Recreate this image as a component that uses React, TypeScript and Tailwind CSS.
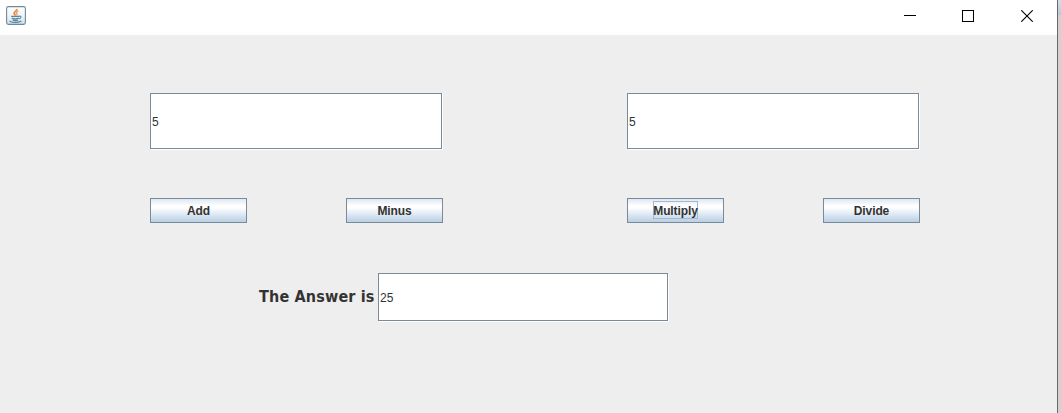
import { useState } from "react";

function JavaIcon() {
  return (
    <svg width="20" height="19" viewBox="0 0 20 19" fill="none">
      <defs>
        <linearGradient id="tile" x1="0" y1="0" x2="0" y2="1">
          <stop offset="0" stopColor="#ffffff" />
          <stop offset="0.5" stopColor="#f2f4f6" />
          <stop offset="1" stopColor="#d3dde5" />
        </linearGradient>
      </defs>
      <rect x="0.6" y="0.6" width="18.8" height="17.8" rx="1.8" fill="url(#tile)" stroke="#6b8aa1" strokeWidth="1.1" />
      <path d="M10.800 2.800c.8 2-3.200 3-2.700 4.800.2.700 1.100 1.200 1.500 1.800" stroke="#ec8a3c" strokeWidth="1.800" />
      <path d="M12.400 5.200c-2 .8-2.500 1.700-1.500 2.600.4.500 0 1-.5 1.500" stroke="#f0a05c" strokeWidth="1.300" />
      <path d="M5.200 10.300h7.900M5.800 12.200c2 .7 5 .7 7 0M6.500 14c1.700.6 4.100.6 5.700 0" stroke="#5684a5" strokeWidth="1.300" />
      <path d="M13 10.300c2.500-.7 2.900 1.500 0 2.500M3.500 15.200c3.600 1.500 9 1.200 12-.3" stroke="#5684a5" strokeWidth="1.100" />
    </svg>
  );
}

function TitleBar() {
  return (
    <header className="flex h-[35px] items-start bg-white pl-[6px]">
      <div className="pt-[6px]">
        <JavaIcon />
      </div>
      <div className="ml-auto flex pr-[24px] pt-[10px]">
        <svg className="mr-[46px]" width="12" height="12" shapeRendering="crispEdges">
          <path d="M0 5.500h12" stroke="#000" />
        </svg>
        <svg className="mr-[47px]" width="12" height="12" shapeRendering="crispEdges">
          <rect x="0.5" y="0.5" width="11" height="11" fill="none" stroke="#000" />
        </svg>
        <svg width="12" height="12">
          <path d="M0.300 0.300l11.400 11.400M11.700 0.300L0.300 11.700" stroke="#000" strokeWidth="1.100" />
        </svg>
      </div>
    </header>
  );
}

function Field({ className, value, onChange, label }: { className: string; value: string; onChange?: (v: string) => void; label: string }) {
  return (
    <input
      aria-label={label}
      value={value}
      readOnly={!onChange}
      onChange={(e) => onChange?.(e.target.value)}
      className={`block border border-[#7a8a99] bg-white pl-px pt-px text-[12px] text-[#333] shadow-[1px_1px_0_#fff] outline-none ${className}`}
    />
  );
}

function Action({ label, focused, onClick }: { label: string; focused?: boolean; onClick: () => void }) {
  return (
    <button
      onClick={onClick}
      className="flex h-[25px] w-[97px] items-start justify-center border border-[#7a8a99] bg-[linear-gradient(#dde8f3_0%,#ffffff_30%,#ffffff_38%,#b8cfe5_100%)] pt-[2px] text-[12px] font-bold tracking-[-0.1px] text-[#333]"
    >
      <span className={`flex h-[18px] items-center border pt-[2px] ${focused ? "w-[45px] justify-center border-[#a3b8cc]" : "border-transparent"}`}>
        {label}
      </span>
    </button>
  );
}

export default function App() {
  const [a, setA] = useState("5");
  const [b, setB] = useState("5");
  const [answer, setAnswer] = useState("25");
  return (
    <div className="flex h-[413px] w-[1061px] overflow-hidden font-['Liberation_Sans',Arial,sans-serif]">
      <div className="flex w-[1057px] flex-col bg-[#eeeeee]">
        <TitleBar />
        <main className="pl-[150px] pt-[58px]">
          <div className="flex gap-[185px]">
            <Field label="First number" className="h-[56px] w-[292px]" value={a} onChange={setA} />
            <Field label="Second number" className="h-[56px] w-[292px]" value={b} onChange={setB} />
          </div>
          <div className="mt-[49px] flex gap-[184px]">
            <div className="flex gap-[99px]">
              <Action label="Add" onClick={() => setAnswer(String(+a + +b))} />
              <Action label="Minus" onClick={() => setAnswer(String(+a - +b))} />
            </div>
            <div className="flex gap-[99px]">
              <Action label="Multiply" focused onClick={() => setAnswer(String(+a * +b))} />
              <Action label="Divide" onClick={() => setAnswer(String(+a / +b))} />
            </div>
          </div>
          <div className="mt-[50px] flex items-center pl-[109px]">
            <span className="w-[119px] whitespace-nowrap font-['DejaVu_Sans_Condensed','DejaVu_Sans',sans-serif] text-[16px] font-bold tracking-[0.16px] text-[#333]">
              The Answer is
            </span>
            <Field label="Answer" className="h-[48px] w-[290px]" value={answer} />
          </div>
        </main>
      </div>
      <div className="w-px bg-[#696969]" />
      <div className="flex w-[3px] flex-col bg-[#d2d2d2]">
        <div className="h-[15px] bg-[linear-gradient(#d5deeb,#b9c7db)]" />
      </div>
    </div>
  );
}
